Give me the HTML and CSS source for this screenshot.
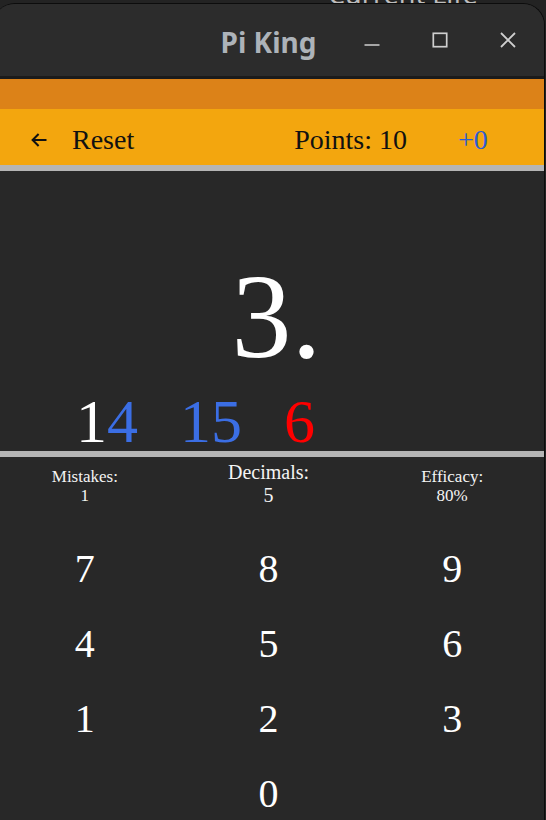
FILE: index.html
```html
<!DOCTYPE html>
<html lang="en">
<head>
<meta charset="utf-8">
<title>Pi King</title>
<link rel="stylesheet" href="styles.css">
</head>
<body>
<div class="backdrop"><span class="behind-text">Current Life</span></div>
<div class="window">
  <header class="titlebar">
    <div class="spacer"></div>
    <div class="title">Pi King</div>
    <div class="controls">
      <span class="ctl"><svg width="16" height="16" viewBox="0 0 16 16"><line x1="0.5" y1="13" x2="15.5" y2="13" stroke="#cfcfcf" stroke-width="1.7"/></svg></span>
      <span class="ctl"><svg width="16" height="16" viewBox="0 0 16 16"><rect x="1.3" y="1.3" width="13.4" height="13.4" fill="none" stroke="#cfcfcf" stroke-width="1.7"/></svg></span>
      <span class="ctl"><svg width="16" height="16" viewBox="0 0 16 16"><path d="M1 1 L15 15 M15 1 L1 15" stroke="#cfcfcf" stroke-width="1.8" fill="none"/></svg></span>
    </div>
  </header>
  <div class="appbar-top"></div>
  <div class="toolbar">
    <span class="back"><svg width="16" height="14" viewBox="0 0 16 14"><path d="M15.5 7 H1.8 M7.6 1 L1.6 7 L7.6 13" stroke="#111" stroke-width="2" fill="none"/></svg></span>
    <span class="reset">Reset</span>
    <span class="points">Points: 10</span>
    <span class="delta">+0</span>
  </div>
  <div class="rule"></div>
  <main class="board">
    <div class="pi">3.</div>
    <div class="typed">
      <span class="group"><span class="ok">1</span><span class="hit">4</span></span>
      <span class="group"><span class="hit">15</span></span>
      <span class="group"><span class="miss">6</span></span>
    </div>
  </main>
  <div class="rule"></div>
  <section class="stats">
    <div class="stat stat-small">Mistakes:<br>1</div>
    <div class="stat stat-big">Decimals:<br>5</div>
    <div class="stat stat-small">Efficacy:<br>80%</div>
  </section>
  <section class="keypad">
    <div class="key">7</div>
    <div class="key">8</div>
    <div class="key">9</div>
    <div class="key">4</div>
    <div class="key">5</div>
    <div class="key">6</div>
    <div class="key">1</div>
    <div class="key">2</div>
    <div class="key">3</div>
    <div class="key key-zero">0</div>
  </section>
</div>
</body>
</html>
```
FILE: styles.css
```css
* { box-sizing: border-box; }
html, body { margin: 0; padding: 0; }
body {
  background: #232323;
  width: 546px;
  height: 820px;
  overflow: hidden;
  font-family: "Liberation Serif", serif;
}
.backdrop {
  height: 3px;
  overflow: hidden;
  padding-left: 328px;
}
.behind-text {
  display: block;
  margin-top: -20px;
  font-family: "Noto Sans", sans-serif;
  font-size: 27px;
  line-height: 27px;
  color: #bdbdbd;
  white-space: nowrap;
}
.window {
  margin-left: -7px;
  width: 552px;
  height: 817px;
  background: #282828;
  border-top: 1px solid #0c0c0c;
  border-right: 1px solid #0c0c0c;
  border-radius: 22px 22px 0 0;
  overflow: hidden;
}
.titlebar {
  height: 75px;
  background: #2c2c2c;
  border-bottom: 3px solid #1b1b1b;
  display: grid;
  grid-template-columns: 1fr auto 1fr;
  align-items: center;
}
.title {
  font-family: "Noto Sans", sans-serif;
  font-weight: 700;
  font-size: 28px;
  line-height: 28px;
  padding-top: 4px;
  color: #adb3b9;
}
.controls {
  display: flex;
  justify-content: flex-end;
  padding-right: 2px;
}
.ctl {
  width: 68px;
  height: 16px;
  display: flex;
  justify-content: center;
}
.ctl svg { display: block; }
.appbar-top {
  height: 30px;
  background: #dc8218;
}
.toolbar {
  height: 56px;
  background: #f3a60e;
  padding-top: 5px;
  padding-left: 38px;
  display: flex;
  align-items: flex-start;
  font-size: 28px;
  line-height: 51px;
  color: #111;
}
.back {
  width: 16px;
  height: 51px;
  display: flex;
  align-items: center;
}
.reset { margin-left: 25px; }
.points { margin-left: 160px; }
.delta { margin-left: 51px; color: #2d5bd2; }
.rule {
  height: 6px;
  background: #b5b5b5;
}
.board {
  height: 280px;
  padding-top: 86px;
  color: #fff;
}
.pi {
  text-align: center;
  padding-left: 16px;
  font-size: 120px;
  line-height: 120px;
  height: 120px;
}
.typed {
  margin-top: 13px;
  height: 61px;
  padding-left: 83px;
  display: flex;
  font-size: 62px;
  line-height: 62px;
  white-space: nowrap;
}
.group { width: 104px; }
.ok { color: #ffffff; }
.hit { color: #3b6ee4; }
.miss { color: #ff0000; }
.stats {
  height: 74px;
  display: grid;
  grid-template-columns: repeat(3, 1fr);
  align-items: start;
  text-align: center;
  color: #f4f4f4;
}
.stat-small {
  padding-top: 10px;
  font-size: 17px;
  line-height: 19px;
}
.stat-big {
  padding-top: 4px;
  font-size: 20px;
  line-height: 23px;
}
.keypad {
  display: grid;
  grid-template-columns: repeat(3, 1fr);
  grid-auto-rows: 75px;
  text-align: center;
  color: #fff;
  font-size: 40px;
  line-height: 75px;
}
.key-zero { grid-column: 2; }
```
